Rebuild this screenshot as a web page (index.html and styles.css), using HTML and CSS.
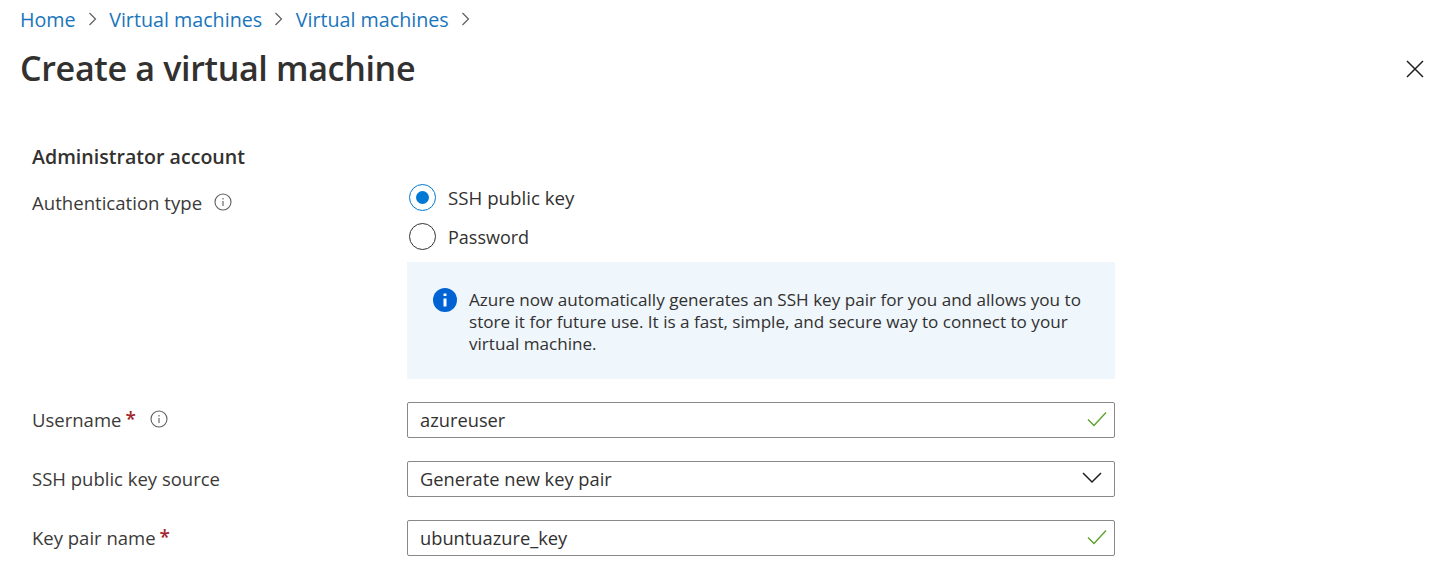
FILE: index.html
```html
<!DOCTYPE html>
<html lang="en">
<head>
<meta charset="utf-8">
<title>Create a virtual machine</title>
<link rel="stylesheet" href="styles.css">
</head>
<body>
<div class="page">
  <nav class="crumbs">
    <a class="crumb">Home</a>
    <svg class="chev" viewBox="0 0 12 16"><path d="M2.5 2 8.5 8l-6 6"/></svg>
    <a class="crumb">Virtual machines</a>
    <svg class="chev" viewBox="0 0 12 16"><path d="M2.5 2 8.5 8l-6 6"/></svg>
    <a class="crumb">Virtual machines</a>
    <svg class="chev" viewBox="0 0 12 16"><path d="M2.5 2 8.5 8l-6 6"/></svg>
  </nav>
  <header class="titlebar">
    <h1 class="title">Create a virtual machine</h1>
    <svg class="close" viewBox="0 0 18 18"><path d="M1 1l16 16M17 1 1 17"/></svg>
  </header>
  <main class="form">
    <h2 class="section">Administrator account</h2>
    <div class="row row-auth">
      <div class="label">Authentication type
        <svg class="info" viewBox="0 0 18 18"><circle cx="9" cy="9" r="8"/><path d="M9 8v5M9 5v1.4"/></svg>
      </div>
      <div class="control">
        <div class="radio-row"><span class="radio on"></span><span>SSH public key</span></div>
        <div class="radio-row"><span class="radio"></span><span>Password</span></div>
        <div class="note">
          <svg class="note-icon" viewBox="0 0 24 24"><circle cx="12" cy="12" r="12"/><path d="M12 10.5v8M12 5.500v2.500"/></svg>
          <p class="note-text">Azure now automatically generates an SSH key pair for you and allows you to store it for future use. It is a fast, simple, and secure way to connect to your virtual machine.</p>
        </div>
      </div>
    </div>
    <div class="row">
      <div class="label">Username <span class="req">*</span>
        <svg class="info info-user" viewBox="0 0 18 18"><circle cx="9" cy="9" r="8"/><path d="M9 8v5M9 5v1.4"/></svg>
      </div>
      <div class="field"><span>azureuser</span><svg class="check" viewBox="0 0 20 16"><path d="M1 8.500 7 14.500 19 1.500"/></svg></div>
    </div>
    <div class="row">
      <div class="label">SSH public key source</div>
      <div class="field"><span>Generate new key pair</span><svg class="caret" viewBox="0 0 20 12"><path d="M1 1l9 9 9-9"/></svg></div>
    </div>
    <div class="row">
      <div class="label">Key pair name <span class="req">*</span></div>
      <div class="field"><span>ubuntuazure_key</span><svg class="check" viewBox="0 0 20 16"><path d="M1 8.500 7 14.500 19 1.500"/></svg></div>
    </div>
  </main>
</div>
</body>
</html>
```
FILE: styles.css
```css
* { box-sizing: border-box; }
html, body { margin: 0; height: 100%; background: #fff; overflow: hidden; }
body { font-family: "Open Sans", "Noto Sans", "Liberation Sans", sans-serif; color: #323130; font-size: 18px; }
.page { padding: 5px 18px 0 20px; }
.crumbs { display: flex; align-items: center; height: 28px; font-size: 19.700px; }
.crumb { color: #1a75bc; }
.chev { width: 12px; height: 16px; margin: 0 10.500px 0 11px; fill: none; stroke: #605e5c; stroke-width: 1.200; }
.titlebar { display: flex; justify-content: space-between; align-items: center; height: 52px; margin-top: 8px; }
.title { margin: 2px 0 0; font-size: 34.100px; font-weight: 600; letter-spacing: -.35px; color: #323130; }
.close { width: 18px; height: 18px; margin-top: 4px; fill: none; stroke: #201f1e; stroke-width: 1.500; }
.form { padding: 52px 0 0 12px; }
.section { margin: 0; height: 24px; line-height: 24px; font-size: 19.600px; font-weight: 600; color: #323130; }
.row { display: grid; grid-template-columns: 375px 708px; align-items: center; height: 36px; margin-bottom: 23px; }
.row-auth { align-items: start; height: auto; margin: 18px 0 23px; }
.label { display: flex; align-items: center; gap: 4px; padding-bottom: 2px; font-size: 18.500px; color: #3b3a39; }
.row-auth .label { margin-top: 2px; height: 28px; gap: 2px; font-size: 18.600px; }
.row-auth .info { margin-left: 10px; }
.req { color: #a4262c; font-weight: 600; font-size: 19px; }
.info { width: 18px; height: 18px; fill: none; stroke: #605e5c; stroke-width: 1.100; }
.info-user { margin-left: 10px; }
.radio-row { display: flex; align-items: center; gap: 12px; height: 41px; margin-left: 2px; font-size: 18px; }
.radio-row:first-child { margin-top: -9px; height: 38px; font-size: 18.700px; }
.radio { position: relative; width: 27px; height: 27px; border-radius: 50%; border: 1.400px solid #323130; }
.radio.on { border-color: #0078d4; }
.radio.on::after { content: ""; position: absolute; inset: 6px; border-radius: 50%; background: #0078d4; }
.note { display: flex; gap: 12px; height: 117px; margin-top: 5px; padding: 26px 30px 0 26px; background: #eff6fc; }
.note-icon { flex: none; width: 24px; height: 24px; fill: #0063d3; stroke: #fff; stroke-width: 3; }
.note-icon circle { stroke: none; }
.note-text { margin: 1px 0 0; font-size: 17.100px; line-height: 22px; color: #323130; }
.field { display: flex; justify-content: space-between; align-items: center; height: 36px; padding: 0 7px 2px 12px; border: 1px solid #8a8886; border-radius: 2px; font-size: 18.300px; color: #323130; }
.check { width: 20px; height: 16px; fill: none; stroke: #5ba02a; stroke-width: 1.300; }
.caret { width: 20px; height: 12px; margin-right: 5px; fill: none; stroke: #201f1e; stroke-width: 1.500; }
```
